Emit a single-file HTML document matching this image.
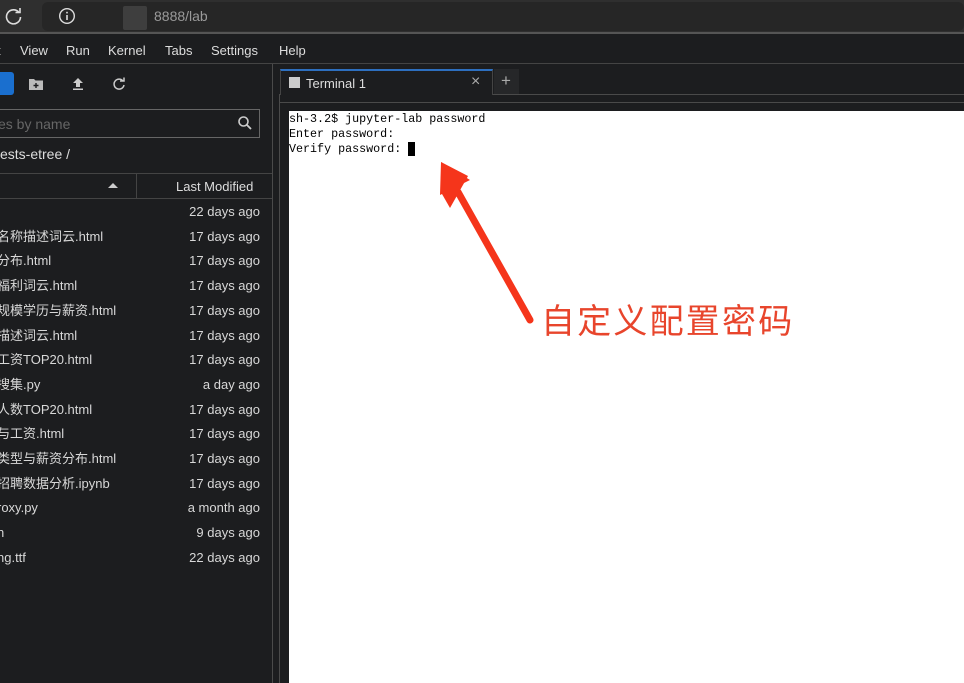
<!DOCTYPE html>
<html><head><meta charset="utf-8"><style>
*{margin:0;padding:0;box-sizing:border-box}
body{width:964px;height:683px;overflow:hidden;background:#1c1d1f;font-family:"Liberation Sans","Noto Sans CJK SC",sans-serif;color:#ddd;position:relative}
.a{position:absolute}
.row{position:absolute;left:0;width:272px;height:24px;font-size:13px;color:#d8d8d8;line-height:16px}
.row .n{position:absolute;left:-3px;top:4px;white-space:nowrap;height:16px;line-height:16px}
.row .d{position:absolute;right:12px;top:4px;white-space:nowrap;height:16px;line-height:16px}
</style></head><body>
<div class="a" style="left:0;top:0;width:964px;height:34px;background:#2f2f2f;border-bottom:2px solid #555"></div>
<div class="a" style="left:42px;top:2px;width:922px;height:29px;background:#262626;border-radius:6px"></div>
<svg class="a" style="left:4px;top:6px" width="20" height="20" viewBox="0 0 20 20"><path d="M15 6.5A7 7 0 1 0 16.5 11" fill="none" stroke="#ddd" stroke-width="1.6"/><path d="M11.5 6.5h4.5V2" fill="none" stroke="#ddd" stroke-width="1.6"/></svg>
<svg class="a" style="left:58px;top:7px" width="18" height="18" viewBox="0 0 18 18"><circle cx="9" cy="9" r="7.3" fill="none" stroke="#ddd" stroke-width="1.4"/><rect x="8.2" y="8" width="1.6" height="5" fill="#ddd"/><rect x="8.2" y="4.8" width="1.6" height="1.6" fill="#ddd"/></svg>
<div class="a" style="left:123px;top:6px;width:24px;height:24px;background:#3e3e3e;border-radius:2px"></div>
<div class="a" style="left:154px;top:8px;font-size:14px;color:#9a9a9a">8888/lab</div>
<div class="a" style="left:0;top:36px;width:964px;height:28px;background:#1c1d1f;border-bottom:1px solid #444"></div>
<div class="a" style="left:-3px;top:43px;font-size:13px;color:#ddd">t</div>
<div class="a" style="left:20px;top:43px;font-size:13px;color:#ddd">View</div>
<div class="a" style="left:66px;top:43px;font-size:13px;color:#ddd">Run</div>
<div class="a" style="left:108px;top:43px;font-size:13px;color:#ddd">Kernel</div>
<div class="a" style="left:165px;top:43px;font-size:13px;color:#ddd">Tabs</div>
<div class="a" style="left:211px;top:43px;font-size:13px;color:#ddd">Settings</div>
<div class="a" style="left:279px;top:43px;font-size:13px;color:#ddd">Help</div>
<div class="a" style="left:0;top:72px;width:14px;height:23px;background:#1a6fcf;border-radius:0 3px 3px 0"></div>
<svg class="a" style="left:28px;top:77px" width="16" height="14" viewBox="0 0 16 14"><path d="M1 2h5l1.5 1.5H15V13H1z" fill="#bbb"/><path d="M8 6v5M5.5 8.5h5" stroke="#1c1d1f" stroke-width="1.4"/></svg>
<svg class="a" style="left:71px;top:77px" width="14" height="14" viewBox="0 0 14 14"><path d="M7 1L2 6h3v4h4V6h3z" fill="#ccc"/><rect x="2" y="11.5" width="10" height="1.5" fill="#ccc"/></svg>
<svg class="a" style="left:112px;top:77px" width="14" height="14" viewBox="0 0 14 14"><path d="M11 4A5 5 0 1 0 12 8" fill="none" stroke="#ccc" stroke-width="1.5"/><path d="M8 4h4V0.5" fill="none" stroke="#ccc" stroke-width="1.5"/></svg>
<div class="a" style="left:0;top:109px;width:260px;height:29px;border:1px solid #666;border-left:none"></div>
<div class="a" style="left:-2px;top:116px;font-size:14px;color:#666">es by name</div>
<svg class="a" style="left:237px;top:115px" width="16" height="16" viewBox="0 0 16 16"><circle cx="6.5" cy="6.5" r="4.5" fill="none" stroke="#ccc" stroke-width="1.6"/><path d="M10 10l4 4" stroke="#ccc" stroke-width="1.8"/></svg>
<div class="a" style="left:0;top:146px;font-size:14px;color:#ddd">ests-etree /</div>
<div class="a" style="left:0;top:173px;width:272px;height:26px;border-top:1px solid #444;border-bottom:1px solid #444"></div>
<div class="a" style="left:136px;top:173px;width:1px;height:26px;background:#444"></div>
<div class="a" style="left:108px;top:183px;width:0;height:0;border-left:5px solid transparent;border-right:5px solid transparent;border-bottom:5px solid #ccc"></div>
<div class="a" style="left:176px;top:179px;font-size:13px;color:#ddd">Last Modified</div>
<div class="row" style="top:200px"><span class="n"></span><span class="d">22 days ago</span></div>
<div class="row" style="top:224.7px"><span class="n">名称描述词云.html</span><span class="d">17 days ago</span></div>
<div class="row" style="top:249.4px"><span class="n">分布.html</span><span class="d">17 days ago</span></div>
<div class="row" style="top:274.1px"><span class="n">福利词云.html</span><span class="d">17 days ago</span></div>
<div class="row" style="top:298.8px"><span class="n">规模学历与薪资.html</span><span class="d">17 days ago</span></div>
<div class="row" style="top:323.5px"><span class="n">描述词云.html</span><span class="d">17 days ago</span></div>
<div class="row" style="top:348.2px"><span class="n">工资TOP20.html</span><span class="d">17 days ago</span></div>
<div class="row" style="top:372.9px"><span class="n">搜集.py</span><span class="d">a day ago</span></div>
<div class="row" style="top:397.6px"><span class="n">人数TOP20.html</span><span class="d">17 days ago</span></div>
<div class="row" style="top:422.3px"><span class="n">与工资.html</span><span class="d">17 days ago</span></div>
<div class="row" style="top:447px"><span class="n">类型与薪资分布.html</span><span class="d">17 days ago</span></div>
<div class="row" style="top:471.7px"><span class="n">招聘数据分析.ipynb</span><span class="d">17 days ago</span></div>
<div class="row" style="top:496.4px"><span class="n">roxy.py</span><span class="d">a month ago</span></div>
<div class="row" style="top:521.1px"><span class="n">n</span><span class="d">9 days ago</span></div>
<div class="row" style="top:545.8px"><span class="n">ng.ttf</span><span class="d">22 days ago</span></div>
<div class="a" style="left:272px;top:64px;width:1px;height:619px;background:#4a4a4a"></div>
<div class="a" style="left:279px;top:94px;width:1px;height:589px;background:#4a4a4a"></div>
<div class="a" style="left:280px;top:94px;width:684px;height:1px;background:#4a4a4a"></div>
<div class="a" style="left:280px;top:69px;width:213px;height:26px;background:#1c1d1f;border-top:2px solid #2d6fbf;border-left:1px solid #444;border-right:1px solid #444"></div>
<div class="a" style="left:289px;top:77px;width:11px;height:11px;background:#ccc"></div>
<div class="a" style="left:306px;top:76px;font-size:13px;color:#ddd">Terminal 1</div>
<div class="a" style="left:471px;top:73px;font-size:16px;color:#aaa">×</div>
<div class="a" style="left:494px;top:69px;width:25px;height:25px;background:#262729"></div>
<div class="a" style="left:501px;top:71px;font-size:17px;color:#aaa">+</div>
<div class="a" style="left:280px;top:102px;width:684px;height:1px;background:#4a4a4a"></div>
<div class="a" style="left:289px;top:111px;width:675px;height:572px;background:#fff"></div>
<div class="a" style="left:289px;top:112px;font-family:'Liberation Mono',monospace;font-size:11.7px;line-height:14.8px;color:#000;white-space:pre">sh-3.2$ jupyter-lab password
Enter password:
Verify password: <span style="background:#000">&nbsp;</span></div>
<svg class="a" style="left:420px;top:150px" width="140" height="180" viewBox="0 0 140 180"><path d="M110 170L38 42" stroke="#f5351b" stroke-width="7" stroke-linecap="round"/><path d="M21 12L48 26L30 58L22 44Z" fill="#f5351b"/><path d="M21 12L20 45L50 30Z" fill="#f5351b"/></svg>
<div class="a" style="left:541px;top:296px;font-size:34px;color:#e8452c;font-family:'Noto Sans CJK SC',sans-serif;letter-spacing:2.2px;line-height:46px">自定义配置密码</div>
</body></html>
